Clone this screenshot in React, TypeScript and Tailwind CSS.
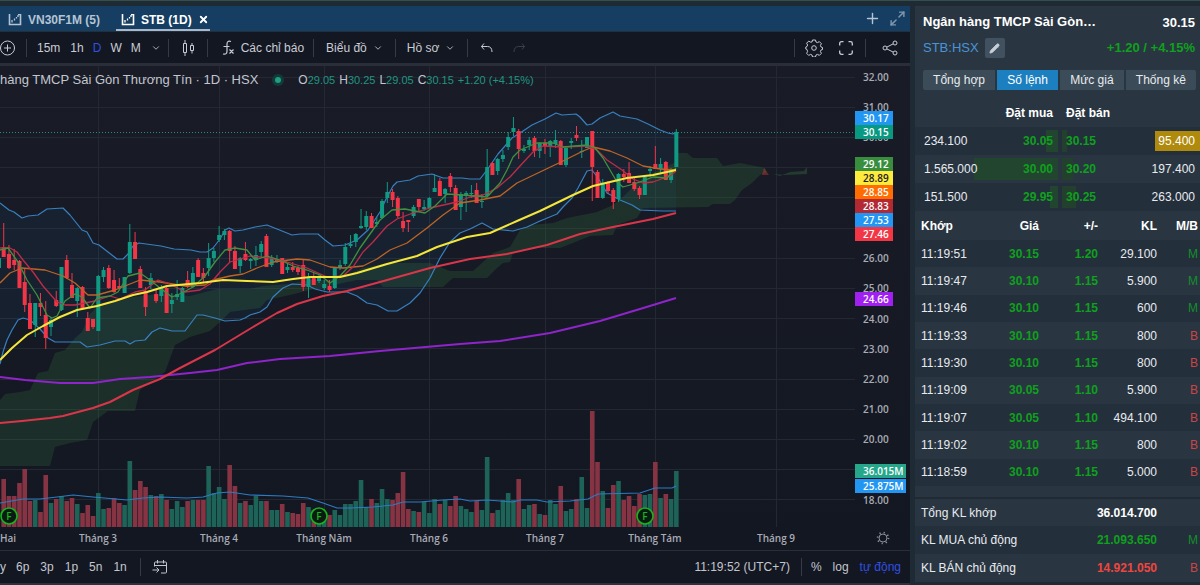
import React from 'react';
import { ChevronDown, Maximize2, Pencil, Plus, X } from 'lucide-react';

type Candle = [up: number, high: number, top: number, bottom: number, low: number, volume: number];
type Point = [number, number];

const CANDLES: Candle[] = [
  [0, 223, 247, 257, 257, 48], [0, 245, 254, 268, 269, 31], [0, 249, 260, 265, 270, 31], [0, 260, 261, 288, 288, 44],
  [0, 268, 282, 305, 312, 58], [0, 294, 303, 329, 329, 26], [1, 303, 303, 325, 337, 27], [0, 293, 303, 307, 316, 15],
  [0, 301, 315, 338, 349, 52], [1, 317, 320, 327, 336, 24], [0, 291, 300, 306, 307, 28], [1, 267, 267, 310, 311, 31],
  [0, 255, 260, 278, 279, 26], [0, 273, 285, 298, 298, 29], [1, 287, 288, 301, 317, 23], [0, 286, 287, 309, 310, 14],
  [0, 312, 318, 331, 331, 22], [0, 319, 319, 327, 329, 11], [1, 275, 276, 331, 331, 34], [1, 267, 270, 277, 282, 18],
  [0, 265, 268, 288, 289, 19], [0, 270, 280, 292, 293, 29], [0, 278, 286, 288, 290, 24], [1, 277, 277, 293, 293, 22],
  [1, 224, 242, 273, 274, 66], [0, 232, 242, 259, 259, 37], [0, 266, 269, 288, 288, 46], [0, 287, 291, 307, 316, 40],
  [1, 273, 278, 285, 289, 32], [0, 290, 294, 301, 303, 31], [1, 285, 287, 296, 302, 33], [0, 287, 288, 313, 313, 27],
  [1, 293, 300, 304, 313, 18], [1, 280, 294, 297, 300, 26], [1, 287, 288, 302, 302, 20], [0, 271, 280, 287, 288, 26],
  [1, 267, 273, 287, 288, 27], [0, 258, 260, 277, 277, 27], [0, 268, 273, 278, 282, 27], [1, 243, 258, 268, 276, 61],
  [1, 248, 251, 258, 262, 34], [1, 226, 235, 240, 242, 40], [1, 229, 231, 235, 240, 28], [0, 230, 231, 251, 262, 62],
  [0, 246, 251, 269, 269, 41], [1, 257, 258, 266, 273, 24], [0, 242, 254, 260, 261, 26], [1, 258, 259, 261, 269, 22],
  [1, 246, 255, 260, 266, 31], [1, 241, 244, 252, 257, 26], [0, 234, 236, 267, 267, 26], [1, 255, 259, 265, 267, 17],
  [1, 255, 259, 261, 263, 17], [0, 258, 258, 274, 274, 23], [1, 263, 267, 270, 273, 15], [0, 262, 267, 270, 272, 14],
  [0, 266, 268, 272, 275, 13], [0, 260, 265, 287, 291, 24], [1, 273, 277, 287, 298, 20], [0, 273, 276, 285, 285, 17],
  [1, 275, 278, 281, 283, 16], [1, 280, 284, 288, 290, 13], [0, 280, 286, 290, 292, 12], [1, 267, 268, 288, 289, 17],
  [1, 260, 265, 268, 270, 12], [1, 243, 247, 264, 266, 23], [1, 235, 244, 246, 248, 23], [1, 233, 234, 242, 247, 26],
  [1, 209, 226, 228, 229, 47], [1, 211, 216, 227, 230, 20], [0, 213, 216, 228, 228, 28], [1, 217, 222, 224, 227, 24],
  [1, 199, 201, 218, 219, 38], [1, 182, 192, 198, 203, 28], [0, 189, 192, 200, 207, 27], [0, 196, 198, 216, 218, 34],
  [0, 212, 221, 228, 232, 55], [0, 220, 220, 222, 232, 18], [1, 205, 207, 216, 218, 16], [0, 199, 199, 207, 211, 15],
  [1, 200, 207, 209, 211, 25], [1, 197, 198, 208, 208, 14], [1, 174, 188, 192, 192, 28], [0, 178, 181, 196, 196, 23],
  [1, 188, 189, 194, 203, 27], [0, 173, 176, 187, 192, 21], [0, 185, 188, 210, 210, 31], [1, 192, 194, 207, 220, 21],
  [1, 191, 193, 196, 212, 18], [1, 185, 193, 194, 198, 15], [0, 183, 190, 203, 203, 26], [1, 194, 201, 202, 208, 17],
  [1, 149, 167, 196, 196, 70], [0, 162, 163, 175, 175, 14], [1, 158, 159, 171, 175, 17], [1, 150, 155, 159, 162, 27],
  [1, 132, 137, 147, 150, 34], [1, 117, 128, 132, 136, 27], [0, 129, 131, 149, 159, 48], [1, 145, 149, 151, 153, 18],
  [1, 137, 140, 145, 150, 22], [0, 136, 138, 151, 157, 23], [1, 142, 143, 151, 158, 13], [0, 139, 143, 146, 154, 12],
  [1, 140, 141, 147, 157, 27], [1, 130, 140, 144, 148, 23], [0, 140, 141, 165, 165, 41], [1, 147, 148, 165, 167, 16],
  [1, 138, 141, 143, 149, 18], [0, 126, 135, 138, 141, 28], [1, 140, 151, 152, 158, 50], [1, 137, 137, 148, 148, 19],
  [0, 131, 131, 167, 201, 116], [0, 170, 172, 198, 198, 65], [1, 179, 183, 198, 199, 36], [0, 181, 182, 191, 194, 19],
  [0, 188, 190, 202, 209, 42], [1, 173, 174, 199, 202, 46], [0, 169, 174, 177, 182, 27], [0, 162, 173, 183, 183, 31],
  [0, 177, 182, 189, 191, 21], [0, 186, 188, 195, 199, 33], [1, 176, 177, 195, 195, 32], [1, 166, 169, 171, 177, 33],
  [0, 146, 164, 169, 169, 65], [1, 158, 164, 169, 173, 29], [0, 161, 162, 180, 180, 33], [1, 168, 170, 180, 183, 28],
  [1, 129, 132, 167, 167, 56],
];

const UPPER_BAND =
  '0,203 9,210 14,212 22,218 28,216 38,215 47,209 63,208 70,215 82,230 87,232 93,243 99,245 108,252 117,259 123,259 128,254 133,246 139,243 161,246 174,249 191,250 200,252 207,252 213,248 220,239 225,230 229,228 235,231 243,230 255,227 267,225 277,229 292,235 300,234 318,234 325,240 333,246 345,245 357,240 368,230 380,212 386,199 393,186 397,182 410,180 418,176 432,174 443,178 462,178 470,179 480,179 487,170 498,154 512,138 520,133 532,125 545,119 556,113 562,115 576,114 580,117 587,125 592,124 600,118 613,112 620,116 637,119 648,124 660,130 668,133 673,134 676,132';
const LOWER_BAND =
  '0,364 3,352 7,340 12,330 18,320 23,318 30,320 40,329 48,338 55,342 80,342 87,347 100,345 115,341 125,341 130,344 135,341 145,340 152,332 160,328 172,331 185,331 197,315 203,315 215,318 225,321 240,320 245,318 250,315 260,312 267,307 273,297 283,288 292,284 307,285 315,289 327,292 347,292 357,296 367,303 377,305 388,311 397,311 410,303 420,293 430,278 440,258 450,242 460,233 470,229 482,223 493,229 513,231 527,227 540,221 557,214 563,207 572,198 578,188 587,171 592,170 598,178 607,193 620,200 632,205 640,210 662,211 676,211';
const CLOUD =
  '0,400 5,394 20,392 30,390 38,373 48,371 55,353 65,350 75,338 82,332 90,314 97,307 133,297 160,294 190,296 217,289 250,289 263,286 290,284 310,280 330,280 347,275 363,268 387,263 430,263 450,271 473,271 493,253 510,247 520,230 530,225 553,223 567,218 597,212 613,205 623,197 640,180 653,173 676,162 677,153 687,153 693,158 717,158 723,166 740,163 765,168 767,172 760,175 752,183 742,190 735,200 730,204 713,204 708,207 643,208 637,218 617,225 613,235 590,236 573,243 560,248 530,248 513,253 510,262 503,263 497,268 487,278 453,278 443,287 383,287 377,280 357,280 343,283 310,290 290,295 267,300 260,308 230,312 220,322 210,331 190,337 175,345 165,372 140,390 135,411 108,411 93,422 87,440 70,443 55,447 50,466 0,466';

const LINES = [
  { color: '#8e24c9', width: 2, points: '0,377 25,380 60,383 93,383 120,379 150,377 190,373 217,370 247,363 280,359 330,356 380,351 460,344 500,341 550,333 600,321 640,309 676,298' },
  { color: '#d9364a', width: 2, points: '0,423 22,421 50,418 63,416 93,408 110,402 133,390 160,379 180,368 215,350 253,327 277,313 297,304 323,296 347,291 380,282 430,268 470,259 507,254 547,245 580,234 613,227 653,219 676,213' },
  { color: '#bf6424', width: 1, points: '0,283 10,273 22,268 45,270 63,276 75,283 88,295 97,295 115,290 140,280 160,282 185,286 205,285 213,280 230,276 243,274 257,268 273,262 297,259 310,260 330,267 343,268 363,266 377,259 390,250 407,243 427,228 443,215 460,203 480,200 500,196 517,183 540,172 563,161 583,151 593,147 610,151 627,158 643,166 660,169 676,170' },
  { color: '#c02c46', width: 1, points: '0,248 10,248 17,252 23,260 33,272 43,286 57,302 65,305 75,305 85,303 95,301 110,296 120,299 135,292 145,290 158,280 170,284 185,292 200,290 210,284 220,272 230,262 250,256 270,258 287,262 307,268 327,277 343,276 353,267 363,252 373,242 387,226 397,219 413,213 430,208 457,202 470,197 483,195 497,188 510,177 520,166 533,152 543,146 563,147 587,146 597,150 607,160 622,170 633,179 643,183 653,182 670,176 676,171' },
  { color: '#43903f', width: 1, points: '0,250 8,248 18,262 27,280 37,295 47,315 52,318 57,316 65,301 75,294 82,297 90,308 97,298 110,296 118,292 128,276 140,273 150,280 160,288 172,297 182,293 193,287 205,276 215,262 225,250 235,248 247,250 255,260 267,256 280,260 293,266 307,270 320,275 330,283 340,276 350,265 360,248 370,234 380,220 392,210 405,209 425,213 435,206 447,194 477,196 487,197 500,183 507,170 513,157 520,150 537,143 553,143 563,147 587,145 595,148 603,158 610,170 617,182 623,187 630,185 640,182 653,177 667,178 676,168' },
  { color: '#f5e63a', width: 2, points: '0,360 12,348 27,335 43,326 60,317 77,310 97,306 115,301 133,295 147,292 167,286 200,283 223,280 247,281 273,282 293,279 310,277 340,277 357,273 387,264 417,256 437,247 467,237 490,233 517,221 540,211 573,195 593,186 610,182 627,178 653,175 676,170' },
];
const VOLUME_AVERAGE =
  '0,503 23,499 40,499 57,497 73,495 93,497 127,500 143,498 160,497 187,498 203,497 217,493 230,492 250,495 283,496 308,498 323,503 337,508 350,508 373,507 393,505 403,502 420,502 443,500 460,499 470,501 487,500 513,502 520,500 537,500 547,502 570,501 588,499 598,494 640,493 655,488 672,488 676,486';

const MONTHS: [string, number][] = [
  ['Hai', 8], ['Tháng 3', 98], ['Tháng 4', 219], ['Tháng Năm', 324], ['Tháng 6', 429], ['Tháng 7', 545], ['Tháng Tám', 655], ['Tháng 9', 776],
];
const PRICES = [32, 31, 30, 26, 25, 24, 23, 22, 21, 20, 18];
const TAGS = [
  { text: '30.17', y: 118, bg: '#2196f3', fg: '#fff', width: 38 },
  { text: '30.15', y: 132, bg: '#089981', fg: '#fff', width: 38 },
  { text: '29.12', y: 164, bg: '#388e3c', fg: '#fff', width: 38 },
  { text: '28.89', y: 178, bg: '#ffeb3b', fg: '#222', width: 38 },
  { text: '28.85', y: 192, bg: '#ff6d00', fg: '#fff', width: 38 },
  { text: '28.83', y: 206, bg: '#b22833', fg: '#fff', width: 38 },
  { text: '27.53', y: 220, bg: '#2196f3', fg: '#fff', width: 38 },
  { text: '27.46', y: 234, bg: '#f23645', fg: '#fff', width: 38 },
  { text: '24.66', y: 299, bg: '#a020f0', fg: '#fff', width: 38 },
  { text: '36.015M', y: 471, bg: '#26a68a', fg: '#fff', width: 51 },
  { text: '25.875M', y: 486, bg: '#2196f3', fg: '#fff', width: 51 },
];
const DIVIDENDS: Point[] = [[9, 516], [319, 516], [645, 516]];

const priceY = (price: number) => 77 + (32 - price) * 30.2;
const candleX = (i: number) => 3.7 + i * 5.255;

const Chart = () => (
  <svg viewBox="0 66 910 484" className="block w-full font-['Open_Sans',sans-serif] text-[10px] font-semibold" role="img" aria-label="STB 1D">
    <defs>
      <linearGradient id="chartBg" x1="0" y1="0" x2="0" y2="1">
        <stop offset="0" stopColor="#191c27" />
        <stop offset="1" stopColor="#131722" />
      </linearGradient>
    </defs>
    <rect x="0" y="66" width="910" height="484" fill="url(#chartBg)" />
    <g stroke="#242833" shapeRendering="crispEdges">
      {Array.from({ length: 15 }, (_, i) => (
        <line key={i} x1="0" x2="855" y1={priceY(32 - i)} y2={priceY(32 - i)} />
      ))}
      {MONTHS.slice(1).map(([name, x]) => (
        <line key={name} x1={x} x2={x} y1="66" y2="527" />
      ))}
    </g>
    <polygon points={`${UPPER_BAND} ${LOWER_BAND.split(' ').reverse().join(' ')}`} fill="#2196f3" fillOpacity="0.06" />
    <polygon points={CLOUD} fill="#43a047" fillOpacity="0.17" />
    <polygon points="764,168 769,175 762,175" fill="#f44336" fillOpacity="0.35" />
    <polygon points="773,174 780,176 790,172 804,171 807,167 807,174 786,175" fill="#43a047" fillOpacity="0.25" />
    {CANDLES.map(([up, , , , , volume], i) => (
      <rect key={i} x={candleX(i) - 2.3} y={527 - volume} width="4.6" height={volume} fill={up ? '#1d6358' : '#863443'} />
    ))}
    <polyline points={VOLUME_AVERAGE} fill="none" stroke="#2b7cc4" strokeWidth="1.2" />
    <line x1="0" x2="855" y1="132.5" y2="132.5" stroke="#2a8a80" strokeDasharray="1 2" />
    <g fill="none" stroke="#3880c0" strokeWidth="1.2" strokeLinejoin="round">
      <polyline points={UPPER_BAND} />
      <polyline points={LOWER_BAND} />
    </g>
    <rect x="-1" y="258" width="2" height="10" fill="#109a83" />
    {CANDLES.map(([up, high, top, bottom, low], i) => (
      <g key={i} fill={up ? '#109a83' : '#f23648'}>
        <rect x={candleX(i) - 0.5} y={high} width="1" height={low - high} />
        <rect x={candleX(i) - 2} y={top} width="4" height={bottom - top} />
      </g>
    ))}
    {LINES.map((line) => (
      <polyline key={line.color} points={line.points} fill="none" stroke={line.color} strokeWidth={line.width === 1 ? 1.3 : 2} strokeLinejoin="round" />
    ))}
    {DIVIDENDS.map(([x, y]) => (
      <g key={x}>
        <circle cx={x} cy={y} r="8" fill="#0c1a14" stroke="#16b51c" strokeWidth="1.6" />
        <text x={x} y={y + 4} textAnchor="middle" fill="#16b51c">F</text>
      </g>
    ))}
    <g fill="#a9acb5">
      {PRICES.map((price) => (
        <text key={price} x="863" y={priceY(price) + 4}>{price.toFixed(2)}</text>
      ))}
      {MONTHS.map(([name, x]) => (
        <text key={name} x={x} y="542" textAnchor="middle">{name}</text>
      ))}
    </g>
    {TAGS.map((tag) => (
      <g key={tag.text}>
        <rect x="855" y={tag.y - 7} width={tag.width} height="14" fill={tag.bg} />
        <text x="863" y={tag.y + 4} fill={tag.fg}>{tag.text}</text>
      </g>
    ))}
    <g fill="none" stroke="#8b8e98">
      <circle cx="883" cy="538" r="4" />
      <circle cx="883" cy="538" r="5.4" strokeWidth="1.8" strokeDasharray="1.2 3.04" />
    </g>
  </svg>
);

const TabIcon = () => (
  <svg viewBox="0 0 14 12" className="h-3 w-3.5" fill="none" stroke="currentColor">
    <path d="M1.5 0V10.5H12.5V0.5H10" strokeWidth="1.6" />
    <path d="M4 8.5V6M6.5 6.500V4.500M8.500 4.500V3M10 3V1" strokeWidth="1.300" />
  </svg>
);

const Divider = ({ className = '' }: { className?: string }) => <div className={`h-[18px] w-px bg-[#363a45] ${className}`} />;

const Toolbar = () => (
  <div className="flex h-[31px] items-center bg-[#131722] text-xs text-[#c9ccd4]">
    <button aria-label="Thêm mã" className="h-4 w-4">
      <svg viewBox="0 0 16 16" fill="none" stroke="currentColor">
        <circle cx="7.5" cy="8" r="7" />
        <path d="M7.5 4.5v7M4 8h7" />
      </svg>
    </button>
    <Divider className="ml-2.5" />
    <button className="ml-2.5">15m</button>
    <button className="ml-2.5">1h</button>
    <button className="ml-[9px] text-[#3050e0]">D</button>
    <button className="ml-[9px]">W</button>
    <button className="ml-[9px]">M</button>
    <button aria-label="Khung thời gian" className="ml-2.5"><ChevronDown size={10} strokeWidth={2} /></button>
    <Divider className="ml-[7px]" />
    <button aria-label="Kiểu nến" className="ml-3">
      <svg viewBox="0 0 14 18" className="h-[18px] w-3.5" fill="none" stroke="currentColor">
        <path d="M2.5 4.500h3v9h-3zM4 1v3M4 14v3M9.500 6.500h3v5h-3zM11 4v2M11 12v2.500" />
      </svg>
    </button>
    <Divider className="ml-3" />
    <button className="ml-3.5 flex items-center gap-1.5">
      <svg viewBox="0 0 13 16" className="h-4 w-[13px]" fill="none" stroke="currentColor">
        <path d="M9 1.500C6 .5 5 2 5 4v7c0 2.500-1 3.500-4 3M1.500 6.500h6M7.500 9.500l4 4M11.500 9.500l-4 4" strokeWidth="1.200" />
      </svg>
      Các chỉ báo
    </button>
    <Divider className="ml-[9px]" />
    <button className="ml-3 flex items-center gap-1.5">Biểu đồ<ChevronDown size={10} /></button>
    <Divider className="ml-3" />
    <button className="ml-[11px] flex items-center gap-1.5">Hồ sơ<ChevronDown size={10} /></button>
    <Divider className="ml-3" />
    <button aria-label="Hoàn tác" className="ml-3">
      <svg viewBox="0 0 14 12" className="h-3 w-3.5" fill="none" stroke="currentColor">
        <path d="M4 1.500L1.500 4.500 4 7.500M1.500 4.500h6c3 0 4.500 2 4.500 5.500" />
      </svg>
    </button>
    <button aria-label="Làm lại" className="ml-[18px] text-[#3c404b]">
      <svg viewBox="0 0 14 12" className="h-3 w-3.5" fill="none" stroke="currentColor">
        <path d="M10 1.500l2.500 3L10 7.500M12.500 4.500h-6C3.500 4.500 2 6.500 2 10" />
      </svg>
    </button>
    <Divider className="ml-auto" />
    <button aria-label="Cài đặt" className="ml-2.5">
      <svg viewBox="0 0 18 18" className="h-[18px] w-[18px]" fill="none" stroke="currentColor" strokeLinejoin="round">
        <path d="M7.500 1h3l.5 2 1.500.6 1.800-1 2.100 2.100-1 1.800.6 1.500 1.500.5v2l-1.500.5-.6 1.500 1 1.800-2.100 2.100-1.800-1-1.500.6-.5 2h-3l-.5-2-1.500-.6-1.800 1-2.100-2.100 1-1.800L2 10.500.8 10V8L2 7.500l.6-1.500-1-1.800 2.100-2.100 1.800 1L7 3z" />
        <circle cx="9" cy="9" r="2.300" />
      </svg>
    </button>
    <button aria-label="Toàn màn hình" className="ml-4">
      <svg viewBox="0 0 14 14" className="h-3.5 w-3.5" fill="none" stroke="currentColor" strokeWidth="1.300">
        <path d="M.7 4.500V2.500Q.7.700 2.500.7h2M9.500.7h2q1.800 0 1.800 1.800v2M13.300 9.500v2q0 1.800-1.800 1.800h-2M4.500 13.300h-2Q.7 13.300.7 11.500v-2" />
      </svg>
    </button>
    <Divider className="ml-3" />
    <button aria-label="Chia sẻ" className="mr-3 ml-4">
      <svg viewBox="0 0 16 16" className="h-4 w-4" fill="none" stroke="currentColor">
        <circle cx="3" cy="8" r="2" />
        <circle cx="13" cy="3" r="2" />
        <circle cx="13" cy="13" r="2" />
        <path d="M4.800 7.100l6.400-3.200M4.800 8.900l6.400 3.200" />
      </svg>
    </button>
  </div>
);

const Legend = () => (
  <div className="absolute top-1 left-0 flex items-center whitespace-nowrap">
    <span className="text-[13px] text-[#c3c6ce]">hàng TMCP Sài Gòn Thương Tín · 1D · HSX</span>
    <span className="ml-3.5 flex h-3 w-3 items-center justify-center rounded-full bg-[#123b38]">
      <span className="h-1.5 w-1.5 rounded-full bg-[#1f9e82]" />
    </span>
    <div className="ml-3.5 flex gap-1 text-[11px] text-[#209480]">
      {[['O', '29.05'], ['H', '30.25'], ['L', '29.05'], ['C', '30.15']].map(([name, value]) => (
        <span key={name}><span className="text-xs text-[#c3c6ce]">{name}</span>{value}</span>
      ))}
      <span className="self-end">+1.20 (+4.15%)</span>
    </div>
  </div>
);

const ChartPanel = () => (
  <div className="min-w-0 flex-1">
    <div className="flex h-[26px] items-center border-b border-[#22303c] bg-[#163e62] text-[#b4c4d4]">
      <button className="ml-2 flex items-center gap-1.5 pt-0.5 text-xs font-bold"><TabIcon />VN30F1M (5)</button>
      <button className="ml-4 flex h-full items-center gap-1.5 border-b-2 border-[#a9b8cc] pt-1 pr-px pl-[5px] text-xs font-bold text-white">
        <TabIcon />STB (1D)<X size={11} strokeWidth={4} />
      </button>
      <button aria-label="Thêm tab" className="ml-auto"><Plus size={17} strokeWidth={2} /></button>
      <button aria-label="Mở rộng" className="mr-1 ml-2 text-[#7f98ae]"><Maximize2 size={17} strokeWidth={2} /></button>
    </div>
    <Toolbar />
    <div className="h-[3px] bg-[#2a2e39]" />
    <div className="relative">
      <Chart />
      <Legend />
    </div>
    <div className="flex h-[33px] items-center gap-[11px] overflow-hidden border-t border-[#2a2e39] bg-[#131722] text-xs text-[#c3c6ce]">
      <button className="-mr-px">y</button>
      {['6p', '3p', '1p', '5n', '1n'].map((range) => (
        <button key={range}>{range}</button>
      ))}
      <Divider className="ml-0.5" />
      <button aria-label="Đi tới ngày">
        <svg viewBox="0 0 16 14" className="h-3.5 w-4" fill="none" stroke="currentColor">
          <path d="M2.500 6.500V3q0-1 1-1h10q1 0 1 1v9q0 1-1 1H9M2.500 5.500h12M5.500 0v3.500M11.500 0v3.500M.5 10h6M4.500 7.500L7 10l-2.500 2.500" />
        </svg>
      </button>
      <span className="ml-auto">11:19:52 (UTC+7)</span>
      <Divider />
      <button className="-ml-0.5">%</button>
      <button>log</button>
      <button className="mr-[9px] text-[#3050e0]">tự động</button>
    </div>
    <div className="h-0.5 bg-[#2a323d]" />
  </div>
);

const BOOK = [
  { bidSize: '234.100', bid: '30.05', bidBar: 12, ask: '30.15', askSize: '95.400', askBar: 5, flash: true },
  { bidSize: '1.565.000', bid: '30.00', bidBar: 84, ask: '30.20', askSize: '197.400', askBar: 11, flash: false },
  { bidSize: '151.500', bid: '29.95', bidBar: 8, ask: '30.25', askSize: '263.000', askBar: 14, flash: false },
];

const TRADES = [
  ['11:19:51', '30.15', '1.20', '29.100', 'M'],
  ['11:19:47', '30.10', '1.15', '5.900', 'M'],
  ['11:19:46', '30.10', '1.15', '600', 'M'],
  ['11:19:33', '30.10', '1.15', '800', 'B'],
  ['11:19:30', '30.10', '1.15', '800', 'B'],
  ['11:19:09', '30.05', '1.10', '5.900', 'B'],
  ['11:19:07', '30.05', '1.10', '494.100', 'B'],
  ['11:19:02', '30.10', '1.15', '800', 'B'],
  ['11:18:59', '30.10', '1.15', '5.000', 'B'],
];

const OrderBook = () => (
  <table className="w-full table-fixed">
    <thead>
      <tr className="h-7 text-white">
        <th className="w-[145px] pr-[7px] text-right">Đặt mua</th>
        <th className="pl-1.5 text-left">Đặt bán</th>
      </tr>
    </thead>
    <tbody>
      {BOOK.map((row) => (
        <tr key={row.bid} className="h-7 odd:bg-[#242f3c]">
          <td className="p-0">
            <div className="relative flex h-[22px] items-center justify-between pr-[7px] pl-[9px]">
              <div className="absolute inset-y-0 right-0.5 bg-[#22452f]" style={{ width: row.bidBar }} />
              <span className="relative">{row.bidSize}</span>
              <span className="relative font-bold text-[#0fa01c]">{row.bid}</span>
            </div>
          </td>
          <td className="p-0">
            <div className="relative flex h-[22px] items-center justify-between pl-1.5">
              <div className="absolute inset-y-0 left-0.5 bg-[#23402f]" style={{ width: row.askBar }} />
              <span className="relative font-bold text-[#0fa01c]">{row.ask}</span>
              <span className={row.flash ? 'bg-[#b08a0c] py-0.5 pr-[5px] pl-[3px] text-white' : 'pr-[5px]'}>{row.askSize}</span>
            </div>
          </td>
        </tr>
      ))}
    </tbody>
  </table>
);

const Side = ({ side }: { side: string }) => <span className={side === 'M' ? 'text-[#12902a]' : 'text-[#c94545]'}>{side}</span>;

const Trades = () => (
  <table className="h-[275px] w-full table-fixed text-right">
    <thead>
      <tr className="h-[29px] text-white">
        <th className="w-[64px] pl-1.5 text-left">Khớp</th>
        <th className="w-[60px] text-right">Giá</th>
        <th className="w-[59px] text-right">+/-</th>
        <th className="w-[59px] text-right">KL</th>
        <th className="pr-0.5 text-right">M/B</th>
      </tr>
    </thead>
    <tbody>
      {TRADES.map(([time, price, change, volume, side]) => (
        <tr key={time} className="odd:bg-[#242f3c]">
          <td className="pl-1.5 text-left">{time}</td>
          <td className="font-bold text-[#0fa01c]">{price}</td>
          <td className="font-bold text-[#0fa01c]">{change}</td>
          <td>{volume}</td>
          <td className="pr-0.5"><Side side={side} /></td>
        </tr>
      ))}
    </tbody>
  </table>
);

const Totals = () => (
  <table className="w-full table-fixed border-t-2 border-[#1f2a35] text-right">
    <tbody>
      <tr className="h-7">
        <td className="w-[142px] pl-1.5 text-left">Tổng KL khớp</td>
        <td className="w-[100px] font-bold text-white">36.014.700</td>
        <td />
      </tr>
      <tr className="h-7 bg-[#242f3c]">
        <td className="pl-1.5 text-left">KL MUA chủ động</td>
        <td className="font-bold text-[#0fa01c]">21.093.650</td>
        <td className="pr-0.5"><Side side="M" /></td>
      </tr>
      <tr className="h-7">
        <td className="pl-1.5 text-left">KL BÁN chủ động</td>
        <td className="font-bold text-[#f0453f]">14.921.050</td>
        <td className="pr-0.5"><Side side="B" /></td>
      </tr>
    </tbody>
  </table>
);

const QuotePanel = () => (
  <div className="w-[285px] shrink-0 overflow-hidden bg-[#293642] text-xs text-[#e8ebee]">
    <div className="flex h-8 items-center justify-between pr-[5px] pl-2 text-[13px] font-bold text-white">
      <span>Ngân hàng TMCP Sài Gòn…</span>
      <span className="pt-0.5">30.15</span>
    </div>
    <div className="flex h-5 items-center pr-[5px] pl-2 text-[13px]">
      <a href="#" className="text-[#4a94d6]">STB:HSX</a>
      <button aria-label="Chỉnh sửa" className="ml-1.5 flex h-5 w-5 items-center justify-center rounded-xs bg-[#41515f] text-[#c6d0d8]">
        <Pencil size={11} className="fill-current" />
      </button>
      <span className="ml-auto font-bold text-[#0fa01c]">+1.20 / +4.15%</span>
    </div>
    <div className="mt-3 mr-1 ml-2 flex h-5 gap-0.5">
      <button className="flex-auto rounded-l-xs bg-[#3c4b58]">Tổng hợp</button>
      <button className="flex-auto bg-[#1c80c0] text-white">Số lệnh</button>
      <button className="flex-auto bg-[#3c4b58]">Mức giá</button>
      <button className="flex-auto rounded-r-xs bg-[#3c4b58]">Thống kê</button>
    </div>
    <div className="mt-[9px]">
      <OrderBook />
      <Trades />
    </div>
    <div className="mt-[11px]">
      <Totals />
    </div>
  </div>
);

const App = () => {
  return (
    <div className="flex min-h-screen items-start gap-[5px] border-t border-[#35504c] bg-[#1e2a34] pt-[5px] font-['Liberation_Sans',Arial,sans-serif]">
      <ChartPanel />
      <QuotePanel />
    </div>
  );
};

export default App;
